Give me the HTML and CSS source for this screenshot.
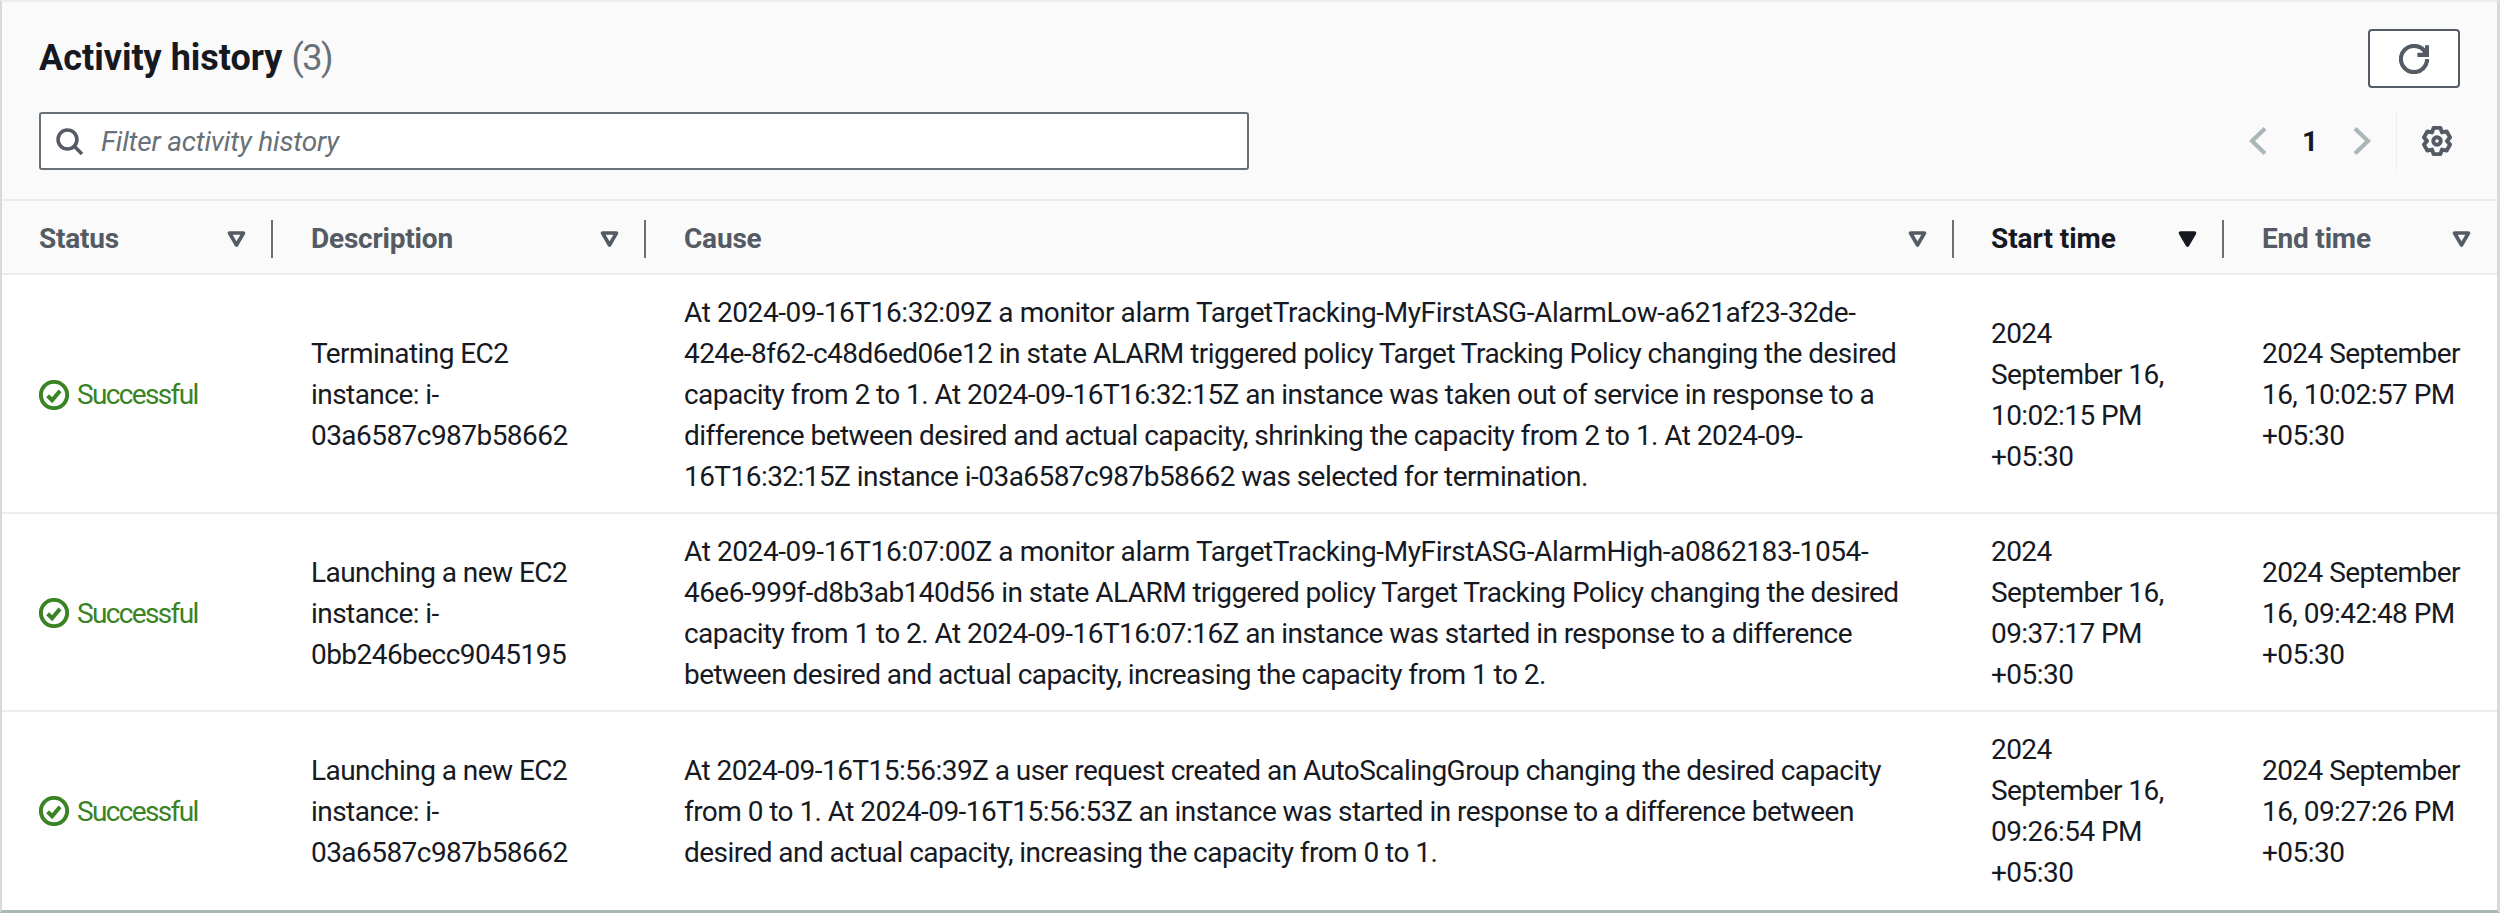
FILE: index.html
```html
<!DOCTYPE html>
<html lang="en">
<head>
<meta charset="utf-8">
<title>Activity history</title>
<link rel="stylesheet" href="styles.css">
</head>
<body>
<section class="panel">
  <header class="panel-head">
    <div class="title-row">
      <h2 class="title">Activity history <span class="count">(3)</span></h2>
      <button class="refresh" type="button" aria-label="Refresh">
        <svg class="icon-refresh" viewBox="0 0 16 16"><path d="M15 8c0 3.87-3.13 7-7 7s-7-3.13-7-7 3.13-7 7-7c2.79 0 5.2 1.63 6.33 4"/><path d="M15 .6v5.2h-5.2"/></svg>
      </button>
    </div>
    <div class="tool-row">
      <label class="filter">
        <svg class="icon-search" viewBox="0 0 16 16"><circle cx="6.8" cy="6.8" r="5.6"/><path d="M10.8 10.8l4.6 4.6"/></svg>
        <span class="placeholder">Filter activity history</span>
      </label>
      <div class="pager">
        <svg class="chev" viewBox="0 0 18 28"><path d="M16 1.5 3 14l13 12.5"/></svg>
        <span class="page">1</span>
        <svg class="chev" viewBox="0 0 18 28"><path d="M2 1.5 15 14 2 26.5"/></svg>
        <span class="pager-div"></span>
        <svg class="icon-gear" viewBox="0 0 16 16"><path d="M6.2 1H9.8L10.65 3.41 13.16 2.94 14.96 6.06 13.3 8 14.96 9.94 13.16 13.06 10.65 12.59 9.8 15H6.2L5.35 12.59 2.84 13.06 1.04 9.94 2.7 8 1.04 6.06 2.84 2.94 5.35 3.41Z"/><circle cx="8" cy="8" r="2"/></svg>
      </div>
    </div>
  </header>
  <table class="grid">
    <colgroup><col class="c1"><col class="c2"><col class="c3"><col class="c4"><col class="c5"></colgroup>
    <thead>
      <tr>
        <th><div class="th-in">Status<svg class="sort" viewBox="0 0 19 16"><path d="M2.5 2h14L9.5 14z"/></svg></div></th>
        <th><div class="th-in">Description<svg class="sort" viewBox="0 0 19 16"><path d="M2.5 2h14L9.5 14z"/></svg></div></th>
        <th><div class="th-in">Cause<svg class="sort" viewBox="0 0 19 16"><path d="M2.5 2h14L9.5 14z"/></svg></div></th>
        <th class="active"><div class="th-in">Start time<svg class="sort filled" viewBox="0 0 19 16"><path d="M2.5 2h14L9.5 14z"/></svg></div></th>
        <th class="last"><div class="th-in">End time<svg class="sort" viewBox="0 0 19 16"><path d="M2.5 2h14L9.5 14z"/></svg></div></th>
      </tr>
    </thead>
    <tbody>
      <tr>
        <td><span class="status"><svg class="icon-ok" viewBox="0 0 16 16"><circle cx="8" cy="8" r="7"/><path d="M4.6 8.4 7 10.8 11.2 5.8"/></svg>Successful</span></td>
        <td>Terminating EC2<br>instance: i-<br>03a6587c987b58662</td>
        <td><span class="wide">At 2024-09-16T16:32:09Z a monitor alarm TargetTracking-MyFirstASG-AlarmLow-a621af23-32de-</span><br>424e-8f62-c48d6ed06e12 in state ALARM triggered policy Target Tracking Policy changing the desired<br>capacity from 2 to 1. At 2024-09-16T16:32:15Z an instance was taken out of service in response to a<br>difference between desired and actual capacity, shrinking the capacity from 2 to 1. At 2024-09-<br>16T16:32:15Z instance i-03a6587c987b58662 was selected for termination.</td>
        <td>2024<br>September 16,<br>10:02:15 PM<br>+05:30</td>
        <td>2024 September<br>16, 10:02:57 PM<br>+05:30</td>
      </tr>
      <tr>
        <td><span class="status"><svg class="icon-ok" viewBox="0 0 16 16"><circle cx="8" cy="8" r="7"/><path d="M4.6 8.4 7 10.8 11.2 5.8"/></svg>Successful</span></td>
        <td>Launching a new EC2<br>instance: i-<br>0bb246becc9045195</td>
        <td><span class="wide">At 2024-09-16T16:07:00Z a monitor alarm TargetTracking-MyFirstASG-AlarmHigh-a0862183-1054-</span><br>46e6-999f-d8b3ab140d56 in state ALARM triggered policy Target Tracking Policy changing the desired<br>capacity from 1 to 2. At 2024-09-16T16:07:16Z an instance was started in response to a difference<br>between desired and actual capacity, increasing the capacity from 1 to 2.</td>
        <td>2024<br>September 16,<br>09:37:17 PM<br>+05:30</td>
        <td>2024 September<br>16, 09:42:48 PM<br>+05:30</td>
      </tr>
      <tr>
        <td><span class="status"><svg class="icon-ok" viewBox="0 0 16 16"><circle cx="8" cy="8" r="7"/><path d="M4.6 8.4 7 10.8 11.2 5.8"/></svg>Successful</span></td>
        <td>Launching a new EC2<br>instance: i-<br>03a6587c987b58662</td>
        <td>At 2024-09-16T15:56:39Z a user request created an AutoScalingGroup changing the desired capacity<br>from 0 to 1. At 2024-09-16T15:56:53Z an instance was started in response to a difference between<br>desired and actual capacity, increasing the capacity from 0 to 1.</td>
        <td>2024<br>September 16,<br>09:26:54 PM<br>+05:30</td>
        <td>2024 September<br>16, 09:27:26 PM<br>+05:30</td>
      </tr>
    </tbody>
  </table>
</section>
</body>
</html>
```
FILE: styles.css
```css
* { box-sizing: border-box; }
html, body { margin: 0; padding: 0; background: #fff; }
body {
  width: 2500px;
  height: 913px;
  overflow: hidden;
  font-family: "Roboto", "Liberation Sans", sans-serif;
  color: #16191f;
}
.panel {
  height: 913px;
  border-top: 2px solid #eaeded;
  border-left: 2px solid #d5dbdb;
  border-right: 3px solid #d5dbdb;
  border-bottom: 3px solid #aab7b8;
  background: #fff;
}
.panel-head {
  background: #fafafa;
  height: 199px;
  padding: 27px 37px 0 37px;
  border-bottom: 2px solid #eaeded;
}
.title-row {
  display: flex;
  justify-content: space-between;
  align-items: flex-start;
  height: 83px;
}
.title {
  margin: 0;
  font-size: 36px;
  line-height: 58px;
  font-weight: 700;
}
.count { font-weight: 400; color: #687078; letter-spacing: -1.5px; }
.refresh {
  width: 92px;
  height: 59px;
  padding: 0;
  display: flex;
  align-items: center;
  justify-content: center;
  background: #fff;
  border: 2px solid #545b64;
  border-radius: 4px;
}
.icon-refresh { width: 30px; height: 30px; fill: none; stroke: #545b64; stroke-width: 2.2; }
.tool-row {
  display: flex;
  justify-content: space-between;
  align-items: stretch;
  height: 58px;
}
.filter {
  width: 1210px;
  display: flex;
  align-items: center;
  gap: 18px;
  padding-left: 15px;
  background: #fff;
  border: 2px solid #687078;
  border-radius: 3px;
}
.icon-search { width: 27px; height: 27px; fill: none; stroke: #545b64; stroke-width: 2.1; }
.placeholder { font-size: 28px; font-style: italic; color: #687078; letter-spacing: -0.2px; }
.pager {
  display: flex;
  align-items: center;
}
.chev { width: 18px; height: 28px; fill: none; stroke: #aab7b8; stroke-width: 4.2; }
.page { width: 86px; text-align: center; font-size: 28px; font-weight: 700; }
.pager-div { align-self: stretch; width: 1px; margin-left: 25px; margin-right: 25px; background: #eaeded; }
.icon-gear { width: 30px; height: 30px; margin-right: 8px; fill: none; stroke: #545b64; stroke-width: 2.1; stroke-linejoin: round; }
.grid {
  width: 2495px;
  table-layout: fixed;
  border-collapse: collapse;
  font-size: 28px;
  line-height: 41px;
  letter-spacing: -0.55px;
}
.c1 { width: 271px; }
.c2 { width: 373px; }
.c3 { width: 1308px; }
.c4 { width: 270px; }
.c5 { width: 273px; }
thead th {
  height: 73px;
  padding: 3px 0 0;
  background: #fafafa;
  border-bottom: 2px solid #eaeded;
  text-align: left;
  font-weight: 700;
  letter-spacing: -0.2px;
  color: #545b64;
  white-space: nowrap;
}
thead th.active { color: #16191f; letter-spacing: -0.05px; }
.th-in {
  height: 38px;
  padding: 0 25px 0 38px;
  display: flex;
  align-items: center;
  justify-content: space-between;
  border-right: 2px solid #687078;
}
th:first-child .th-in { padding-left: 37px; }
th:nth-child(4) .th-in { padding-left: 37px; }
th.last .th-in { border-right: 0; padding-right: 26px; }
.sort { width: 19px; height: 16px; fill: none; stroke: #545b64; stroke-width: 3.6; stroke-linejoin: round; }
.sort.filled { fill: #16191f; stroke: #16191f; }
tbody td {
  padding: 17px 10px 15px 38px;
  border-bottom: 2px solid #eaeded;
  white-space: nowrap;
  vertical-align: middle;
}
tbody td:first-child { padding-left: 37px; }
tbody td:nth-child(4) { padding-left: 37px; }
tbody tr:last-child td { border-bottom: 0; }
.wide { letter-spacing: -0.4px; }
.status { display: flex; align-items: center; gap: 8px; color: #3a8324; letter-spacing: -1.65px; }
.icon-ok { width: 30px; height: 30px; fill: none; stroke: #3a8324; stroke-width: 2.1; }
```
